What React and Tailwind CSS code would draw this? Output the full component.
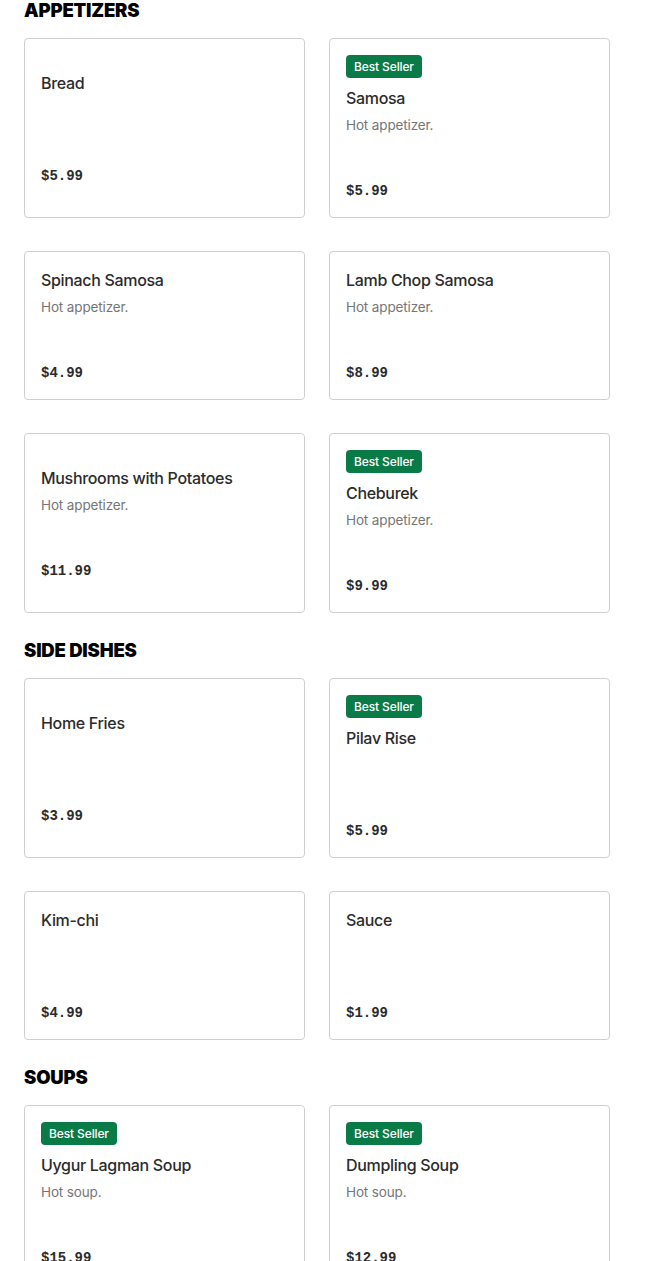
const sections = [
  {
    title: 'APPETIZERS',
    items: [
      { name: 'Bread', price: '$5.99' },
      { name: 'Samosa', desc: 'Hot appetizer.', price: '$5.99', best: true },
      { name: 'Spinach Samosa', desc: 'Hot appetizer.', price: '$4.99' },
      { name: 'Lamb Chop Samosa', desc: 'Hot appetizer.', price: '$8.99' },
      { name: 'Mushrooms with Potatoes', desc: 'Hot appetizer.', price: '$11.99' },
      { name: 'Cheburek', desc: 'Hot appetizer.', price: '$9.99', best: true },
    ],
  },
  {
    title: 'SIDE DISHES',
    items: [
      { name: 'Home Fries', price: '$3.99' },
      { name: 'Pilav Rise', price: '$5.99', best: true },
      { name: 'Kim-chi', price: '$4.99' },
      { name: 'Sauce', price: '$1.99' },
    ],
  },
  {
    title: 'SOUPS',
    items: [
      { name: 'Uygur Lagman Soup', desc: 'Hot soup.', price: '$15.99', best: true },
      { name: 'Dumpling Soup', desc: 'Hot soup.', price: '$12.99', best: true },
    ],
  },
];

const MenuCard = ({ item }) => (
  <div className="flex flex-col justify-center border border-[#cfcfcf] rounded-[4px] bg-white p-4">
    {item.best && (
      <div className="mb-2 flex">
        <span className="flex h-[23px] items-center rounded-[4px] bg-[#0a7a46] px-2 text-[12px] leading-none font-medium tracking-[-0.01em] text-white">
          Best Seller
        </span>
      </div>
    )}
    <div className="text-[16px] leading-6 font-medium text-[#2b2b2b] tracking-[-0.02em]">{item.name}</div>
    <div className="mt-[3px] min-h-[48px] text-[13.5px] leading-6 tracking-[-0.01em] text-[#767676]">{item.desc}</div>
    <div className="mt-5 font-['Liberation_Mono',monospace] text-[14px] leading-5 font-bold text-[#2b2b2b]">{item.price}</div>
  </div>
);

export default function App() {
  return (
    <div className="min-h-screen bg-white pl-6 font-['Inter',sans-serif]">
      {sections.map((section, i) => (
        <div key={section.title}>
          <h2 className={`${i === 0 ? 'mt-0' : 'mt-[27px]'} mb-[18px] text-[18.5px] leading-5 font-black tracking-[-0.01em] text-black`}>
            {section.title}
          </h2>
          <div className="grid w-[586px] grid-cols-2 gap-x-6 gap-y-[33px]">
            {section.items.map((item) => (
              <MenuCard key={item.name} item={item} />
            ))}
          </div>
        </div>
      ))}
    </div>
  );
}
